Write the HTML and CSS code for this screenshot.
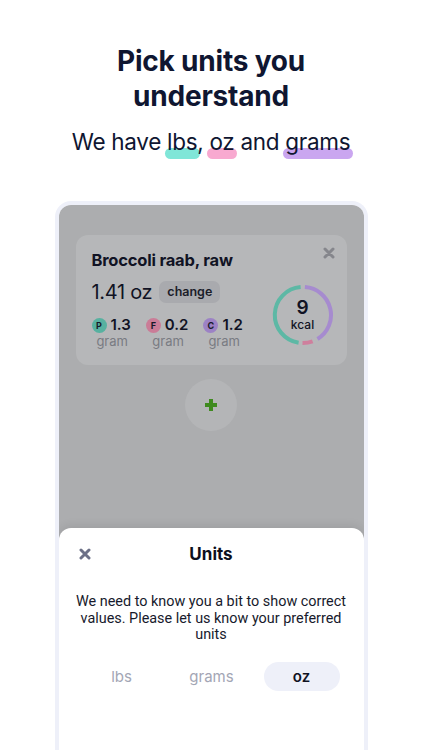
FILE: index.html
```html
<!DOCTYPE html>
<html lang="en">
<head>
<meta charset="utf-8">
<title>Pick units you understand</title>
<link rel="stylesheet" href="styles.css">
</head>
<body>
<header class="hero">
  <h1 class="title">Pick units you<br>understand</h1>
  <p class="subtitle">We have <span class="hl hl-teal">lbs</span>, <span class="hl hl-pink">oz</span> and <span class="hl hl-purple">grams</span></p>
</header>

<div class="device">
  <div class="screen">
    <div class="card">
      <div class="card-info">
        <div class="food-name">Broccoli raab, raw</div>
        <div class="amount-row">
          <span class="amount">1.41 oz</span>
          <span class="change">change</span>
        </div>
        <div class="macros">
          <div class="macro">
            <div class="macro-top"><span class="badge badge-p">P</span><span class="macro-val">1.3</span></div>
            <div class="macro-unit">gram</div>
          </div>
          <div class="macro">
            <div class="macro-top"><span class="badge badge-f">F</span><span class="macro-val">0.2</span></div>
            <div class="macro-unit">gram</div>
          </div>
          <div class="macro">
            <div class="macro-top"><span class="badge badge-c">C</span><span class="macro-val">1.2</span></div>
            <div class="macro-unit">gram</div>
          </div>
        </div>
      </div>
      <div class="card-side">
        <svg class="card-close" width="12" height="12" viewBox="0 0 12 12">
          <path d="M2 2L10 10M10 2L2 10" stroke="#85868c" stroke-width="3" stroke-linecap="round"/>
        </svg>
        <div class="ring">
          <svg class="ring-svg" width="62" height="62" viewBox="0 0 62 62">
            <path d="M32.9 3.1 A28 28 0 0 1 45.5 55" fill="none" stroke="#a68bcf" stroke-width="4"/>
            <path d="M40.6 57.3 A28 28 0 0 1 30.5 59" fill="none" stroke="#cf7f9d" stroke-width="4"/>
            <path d="M26.6 58.7 A28 28 0 0 1 28.6 3.1" fill="none" stroke="#5db8a5" stroke-width="4"/>
          </svg>
          <div class="ring-text">
            <span class="kcal-num">9</span>
            <span class="kcal-label">kcal</span>
          </div>
        </div>
      </div>
    </div>

    <div class="add-btn">
      <svg width="14" height="14" viewBox="0 0 14 14">
        <path d="M7 1V13M1 7H13" stroke="#3f8a1f" stroke-width="4"/>
      </svg>
    </div>

    <div class="sheet">
      <div class="sheet-head">
        <svg class="sheet-close" width="12" height="12" viewBox="0 0 12 12">
          <path d="M2 2L10 10M10 2L2 10" stroke="#6c7087" stroke-width="3" stroke-linecap="round"/>
        </svg>
        <div class="sheet-title">Units</div>
        <span class="sheet-spacer"></span>
      </div>
      <p class="sheet-text">We need to know you a bit to show correct<br>values. Please let us know your preferred<br>units</p>
      <div class="segments">
        <span class="seg">lbs</span>
        <span class="seg">grams</span>
        <span class="seg seg-active">oz</span>
      </div>
    </div>
  </div>
</div>
</body>
</html>
```

FILE: styles.css
```css
html, body {
  margin: 0;
  padding: 0;
  height: 750px;
  overflow: hidden;
  background: #ffffff;
}

body {
  font-family: Inter, "Noto Sans", "Liberation Sans", sans-serif;
  color: #0f1631;
}

.hero {
  text-align: center;
  padding-top: 44px;
}

.title {
  margin: 0;
  font-size: 28px;
  line-height: 35px;
  font-weight: 700;
  letter-spacing: -0.2px;
  color: #0f1631;
}

.subtitle {
  position: relative;
  z-index: 0;
  margin: 13px 0 0;
  font-size: 22.5px;
  line-height: 30px;
  font-weight: 400;
  letter-spacing: -0.3px;
  color: #0f1631;
}

.hl {
  position: relative;
}

.hl::before {
  content: "";
  position: absolute;
  left: -2px;
  right: -3px;
  bottom: -4px;
  height: 11px;
  border-radius: 6px;
  z-index: -1;
}

.hl-teal::before { background: #80e6d8; }
.hl-pink::before { background: #f8a9d0; }
.hl-purple::before { background: #caa6f0; }

.device {
  width: 305px;
  margin: 44px auto 0;
  border: 4px solid #eef0f9;
  border-bottom: none;
  border-radius: 16px 16px 0 0;
  height: 560px;
}

.screen {
  height: 100%;
  background: #acadaf;
  border-radius: 12px 12px 0 0;
  display: flex;
  flex-direction: column;
  align-items: stretch;
  overflow: hidden;
}

.card {
  margin: 30px 17px 0;
  padding: 14px 11px 14px 16px;
  background: #b6b7b9;
  border-radius: 12px;
  display: flex;
  justify-content: space-between;
  height: 102px;
}

.food-name {
  font-size: 16.5px;
  line-height: 22px;
  font-weight: 700;
  color: #111324;
  letter-spacing: -0.2px;
}

.amount-row {
  display: flex;
  align-items: center;
  gap: 7px;
  margin-top: 9px;
}

.amount {
  font-size: 20px;
  line-height: 24px;
  color: #111324;
  letter-spacing: -0.3px;
}

.change {
  background: #a9aaae;
  border-radius: 7px;
  padding: 0 8px;
  height: 22px;
  line-height: 22px;
  font-size: 12.5px;
  font-weight: 600;
  color: #1b1d29;
}

.macros {
  display: flex;
  gap: 15px;
  margin-top: 12px;
}

.macro {
  display: flex;
  flex-direction: column;
  align-items: center;
}

.macro-top {
  display: flex;
  align-items: center;
  gap: 4px;
}

.badge {
  width: 15px;
  height: 15px;
  border-radius: 50%;
  font-size: 9px;
  font-weight: 700;
  line-height: 15px;
  text-align: center;
  color: #17192a;
}

.badge-p { background: #57b1a0; }
.badge-f { background: #ca7c97; }
.badge-c { background: #9c82c5; }

.macro-val {
  font-size: 15px;
  line-height: 18px;
  font-weight: 600;
  color: #111324;
}

.macro-unit {
  font-size: 13px;
  line-height: 15px;
  color: #797b82;
  margin-left: 2px;
}

.card-side {
  display: flex;
  flex-direction: column;
  align-items: flex-end;
  width: 64px;
}

.card-close {
  margin-top: -2px;
  margin-right: 1px;
}

.ring {
  position: relative;
  width: 62px;
  height: 62px;
  margin-top: 25px;
  margin-right: 2px;
}

.ring-svg {
  display: block;
}

.ring-text {
  position: absolute;
  inset: 0;
  display: flex;
  flex-direction: column;
  align-items: center;
  justify-content: center;
}

.kcal-num {
  font-size: 19px;
  line-height: 20px;
  font-weight: 600;
  color: #111324;
}

.kcal-label {
  font-size: 12px;
  line-height: 14px;
  font-weight: 500;
  color: #111324;
}

.add-btn {
  align-self: center;
  width: 52px;
  height: 52px;
  border-radius: 50%;
  background: #b4b5b7;
  margin-top: 14px;
  display: flex;
  align-items: center;
  justify-content: center;
}

.sheet {
  margin-top: 97px;
  flex: 1;
  background: #ffffff;
  border-radius: 12px 12px 0 0;
  box-shadow: 0 -3px 8px rgba(0, 0, 0, 0.08);
  padding: 14px 12px 0;
}

.sheet-head {
  display: flex;
  align-items: center;
  justify-content: space-between;
  padding: 0 8px 0 8px;
}

.sheet-title {
  font-size: 17px;
  line-height: 24px;
  font-weight: 700;
  color: #0d0f1c;
}

.sheet-spacer {
  width: 12px;
}

.sheet-text {
  margin: 28px 0 0;
  text-align: center;
  font-family: Roboto, "Liberation Sans", sans-serif;
  font-size: 14.4px;
  line-height: 16.5px;
  white-space: nowrap;
  color: #171a2c;
}

.segments {
  display: flex;
  align-items: center;
  gap: 14px;
  margin-top: 18px;
  padding-left: 13px;
}

.seg {
  width: 76px;
  height: 29px;
  line-height: 29px;
  text-align: center;
  font-size: 15px;
  color: #a3a6b5;
  border-radius: 15px;
}

.seg-active {
  background: #eef0f9;
  color: #101222;
  font-weight: 600;
}
```
